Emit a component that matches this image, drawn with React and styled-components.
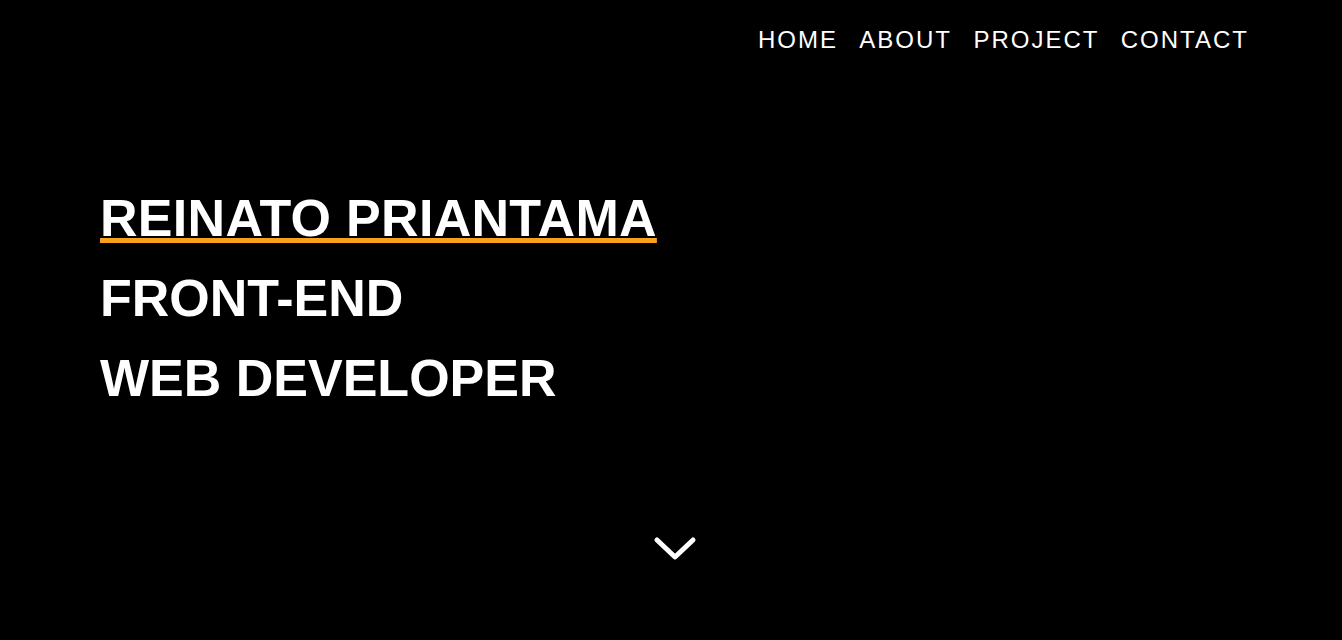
import styled, { createGlobalStyle } from 'styled-components';

const GlobalStyle = createGlobalStyle`
  html, body {
    margin: 0;
    padding: 0;
    background-color: #000;
  }
  body {
    font-family: "Liberation Sans", Arial, sans-serif;
    color: #fff;
  }
`;

const Page = styled.div`
  height: 100vh;
  display: flex;
  flex-direction: column;
  background-color: #000;
  overflow: hidden;
`;

const Nav = styled.nav`
  display: flex;
  justify-content: flex-end;
  padding: 26px 93px 0 0;
  ul {
    display: flex;
    gap: 21.4px;
    list-style: none;
    margin: 0;
    padding: 0;
  }
`;

const NavLink = styled.a`
  color: #fff;
  text-decoration: none;
  font-size: 24px;
  letter-spacing: 2px;
  line-height: 28px;
`;

const Hero = styled.section`
  padding: 124px 0 0 100px;
`;

const Title = styled.h1`
  margin: 0;
  font-size: 52px;
  font-weight: 700;
  line-height: 80px;
  span {
    display: block;
  }
`;

const Name = styled.em`
  font-style: normal;
  letter-spacing: 0.3px;
  text-decoration: underline;
  text-decoration-color: #f9a11b;
  text-decoration-thickness: 5px;
  text-underline-offset: 2px;
  text-decoration-skip-ink: none;
`;

const ScrollDown = styled.a`
  display: flex;
  justify-content: center;
  margin-top: 116px;
  padding-left: 8px;
  svg {
    display: block;
  }
`;

export default function App() {
  return (
    <>
      <GlobalStyle />
      <Page>
        <Nav>
          <ul>
            <li><NavLink href="#home">HOME</NavLink></li>
            <li><NavLink href="#about">ABOUT</NavLink></li>
            <li><NavLink href="#project">PROJECT</NavLink></li>
            <li><NavLink href="#contact">CONTACT</NavLink></li>
          </ul>
        </Nav>
        <Hero>
          <Title>
            <span><Name>REINATO PRIANTAMA</Name></span>
            <span>FRONT-END</span>
            <span>WEB DEVELOPER</span>
          </Title>
        </Hero>
        <ScrollDown href="#about">
          <svg width="44" height="30" viewBox="0 0 44 30" fill="none">
            <path d="M4 6 L22 23 L40 6" stroke="#fff" strokeWidth="5" strokeLinecap="round" strokeLinejoin="round" />
          </svg>
        </ScrollDown>
      </Page>
    </>
  );
}
